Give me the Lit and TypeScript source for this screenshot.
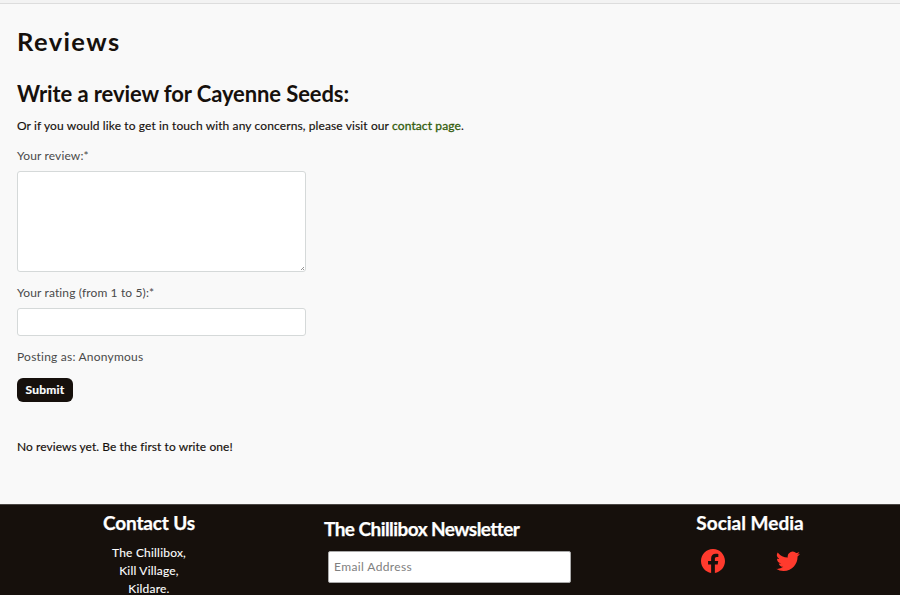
import { LitElement, html, css } from "lit";
import { customElement } from "lit/decorators.js";

@customElement("review-form")
class ReviewForm extends LitElement {
  static styles = css`
    :host { display: block; }
    .form { display: flex; flex-direction: column; align-items: flex-start; }
    .label { font-size: 12px; line-height: 18px; color: #4a4a4a; letter-spacing: 0.13px; }
    .label.plain { letter-spacing: 0.22px; }
    .area { position: relative; margin: 6px 0 12px; }
    .review, .rating {
      display: block; box-sizing: border-box; width: 289px; margin: 0;
      border: 1px solid #d5d9d9; border-radius: 3px; background: #fff; outline: none;
    }
    .review { height: 101px; resize: none; }
    .grip { position: absolute; right: 2px; bottom: 2px; width: 3px; height: 3px; stroke: #777; stroke-width: 0.8; }
    .rating { height: 28px; margin: 6px 0 12px; }
    .submit {
      width: 56px; height: 24px; margin: 12px 0 0; padding: 0; border: 0;
      border-radius: 6px; background: #16100c; color: #fff;
      font: 700 12px/24px Lato, sans-serif; letter-spacing: 0.2px;
      -webkit-text-stroke: 0.2px #fff;
    }
  `;
  render() {
    return html`<form class="form">
      <label class="label">Your review:*</label>
      <div class="area">
        <textarea class="review"></textarea>
        <svg class="grip" viewBox="0 0 3 3"><path d="M0 3L3 0M2 3L3 2"/></svg>
      </div>
      <label class="label">Your rating (from 1 to 5):*</label>
      <input class="rating" />
      <div class="label plain">Posting as: Anonymous</div>
      <button class="submit" type="button">Submit</button>
    </form>`;
  }
}

@customElement("site-footer")
class SiteFooter extends LitElement {
  static styles = css`
    :host { display: block; height: 91px; overflow: hidden; }
    .footer {
      box-sizing: border-box; height: 91px; display: grid;
      grid-template-columns: 298px 302px 300px;
      background: #16100c; border-top: 1px solid #4a4643; color: #fff;
    }
    .col { display: flex; flex-direction: column; align-items: center; }
    .title {
      margin: 0; font-size: 19px; line-height: 24px; font-weight: 700; white-space: nowrap;
      font-variant-ligatures: none; -webkit-text-stroke: 0.25px #fff;
    }
    .contact { padding-top: 6px; }
    .contact .title { letter-spacing: -0.15px; }
    .address { margin-top: 9px; text-align: center; font-size: 12px; line-height: 18px; letter-spacing: 0.2px; -webkit-text-stroke: 0.1px #fff; }
    .news { align-items: flex-start; padding: 12px 0 0 26px; }
    .news .title { letter-spacing: -0.56px; }
    .email {
      box-sizing: border-box; width: 243px; height: 32px; margin: 10px 0 0 4px; padding: 0 5px 2px;
      border: 1px solid #aaa; border-radius: 2px; background: #fff; outline: none;
      font: 12px Lato, sans-serif; letter-spacing: 0.38px;
    }
    .email::placeholder { color: #808080; }
    .social { padding-top: 6px; }
    .icons { display: flex; gap: 51px; margin: 14px 0 0 1px; }
    .icon { display: block; width: 24px; height: 24px; fill: #ff3a2d; }
  `;
  render() {
    return html`<footer class="footer">
      <section class="col contact">
        <h3 class="title">Contact Us</h3>
        <div class="address">The Chillibox,<br />Kill Village,<br />Kildare.</div>
      </section>
      <section class="col news">
        <h3 class="title">The Chillibox Newsletter</h3>
        <input class="email" placeholder="Email Address" />
      </section>
      <section class="col social">
        <h3 class="title">Social Media</h3>
        <div class="icons">
          <svg class="icon" viewBox="0 0 16 16"><path d="M16 8.049c0-4.446-3.582-8.05-8-8.05C3.58 0-.002 3.603-.002 8.05c0 4.017 2.926 7.347 6.75 7.951v-5.625h-2.03V8.05H6.75V6.275c0-2.017 1.195-3.131 3.022-3.131.876 0 1.791.157 1.791.157v1.98h-1.009c-.993 0-1.303.621-1.303 1.258v1.51h2.218l-.354 2.326H9.25V16c3.824-.604 6.75-3.934 6.75-7.951z"/></svg>
          <svg class="icon" viewBox="0 0.3 16 16"><path d="M5.026 15c6.038 0 9.341-5.003 9.341-9.334 0-.14 0-.282-.006-.422A6.685 6.685 0 0 0 16 3.542a6.658 6.658 0 0 1-1.889.518 3.301 3.301 0 0 0 1.447-1.817 6.533 6.533 0 0 1-2.087.793A3.286 3.286 0 0 0 7.875 6.03a9.325 9.325 0 0 1-6.767-3.429 3.289 3.289 0 0 0 1.018 4.382A3.323 3.323 0 0 1 .64 6.575v.045a3.288 3.288 0 0 0 2.632 3.218 3.203 3.203 0 0 1-.865.115 3.23 3.23 0 0 1-.614-.057 3.283 3.283 0 0 0 3.067 2.277A6.588 6.588 0 0 1 .78 13.58a6.32 6.32 0 0 1-.78-.045A9.344 9.344 0 0 0 5.026 15z"/></svg>
        </div>
      </section>
    </footer>`;
  }
}

@customElement("app-root")
class AppRoot extends LitElement {
  static styles = css`
    :host {
      display: flex; flex-direction: column; height: 595px; overflow: hidden;
      background: #f9f9f9; color: #16100c; font-family: Lato, sans-serif;
    }
    .bar { height: 3px; flex: none; background: #f3f3f3; border-bottom: 1px solid #ddd; }
    .main { flex: 1; padding: 22px 17px 0; }
    .heading { margin: 0; font-size: 25.5px; line-height: 31px; font-weight: 700; letter-spacing: 1.4px; }
    .sub { margin: 21px 0 0; font-size: 22px; line-height: 32px; font-weight: 700; letter-spacing: -0.1px; }
    .text { margin: 0; font-size: 12px; line-height: 18px; letter-spacing: 0.06px; -webkit-text-stroke: 0.15px currentColor; }
    .intro { margin: 7px 0 12px; letter-spacing: 0.11px; }
    .link { color: #335c0c; text-decoration: none; -webkit-text-stroke: 0.3px currentColor; }
    .empty { margin-top: 36px; }
  `;
  render() {
    return html`
      <div class="bar"></div>
      <main class="main">
        <h1 class="heading">Reviews</h1>
        <h2 class="sub">Write a review for Cayenne Seeds:</h2>
        <p class="text intro">Or if you would like to get in touch with any concerns, please visit our <a class="link" href="#">contact page</a>.</p>
        <review-form></review-form>
        <p class="text empty">No reviews yet. Be the first to write one!</p>
      </main>
      <site-footer></site-footer>`;
  }
}
